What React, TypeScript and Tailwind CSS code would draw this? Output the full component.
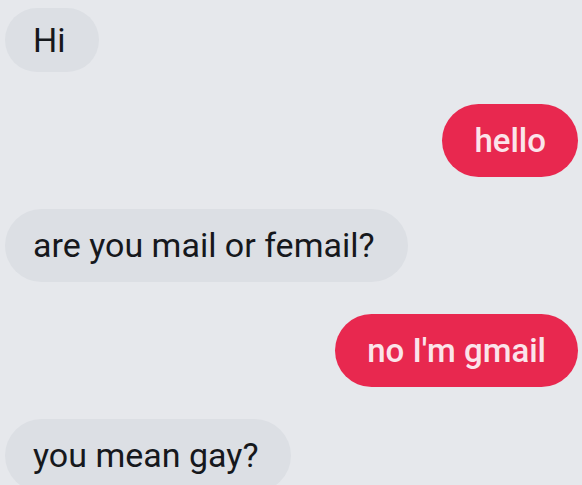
import React from "react";

const Left = ({ text, h = "h-[73px]" }: { text: string; h?: string }) => (
  <div className="flex justify-start">
    <div
      className={`${h} flex items-center rounded-full bg-[#dcdfe4] pl-[28px] pr-[33px] text-[34px] text-[#16181c]`}
      style={{ fontFamily: "Roboto, 'Liberation Sans', sans-serif" }}
    >
      {text}
    </div>
  </div>
);

const Right = ({ text }: { text: string }) => (
  <div className="flex justify-end">
    <div
      className="h-[73px] flex items-center rounded-full bg-[#e8284f] px-[32px] text-[33px] font-medium text-[#fbe4ea]"
      style={{ fontFamily: "Roboto, 'Liberation Sans', sans-serif" }}
    >
      {text}
    </div>
  </div>
);

export default function App() {
  return (
    <div className="w-[582px] h-[485px] overflow-hidden bg-[#e6e8ec] pt-[8px] pl-[5px] pr-[4px] flex flex-col gap-[32px]">
      <Left text="Hi" h="h-[64px]" />
      <Right text="hello" />
      <Left text="are you mail or femail?" />
      <Right text="no I'm gmail" />
      <Left text="you mean gay?" />
    </div>
  );
}
